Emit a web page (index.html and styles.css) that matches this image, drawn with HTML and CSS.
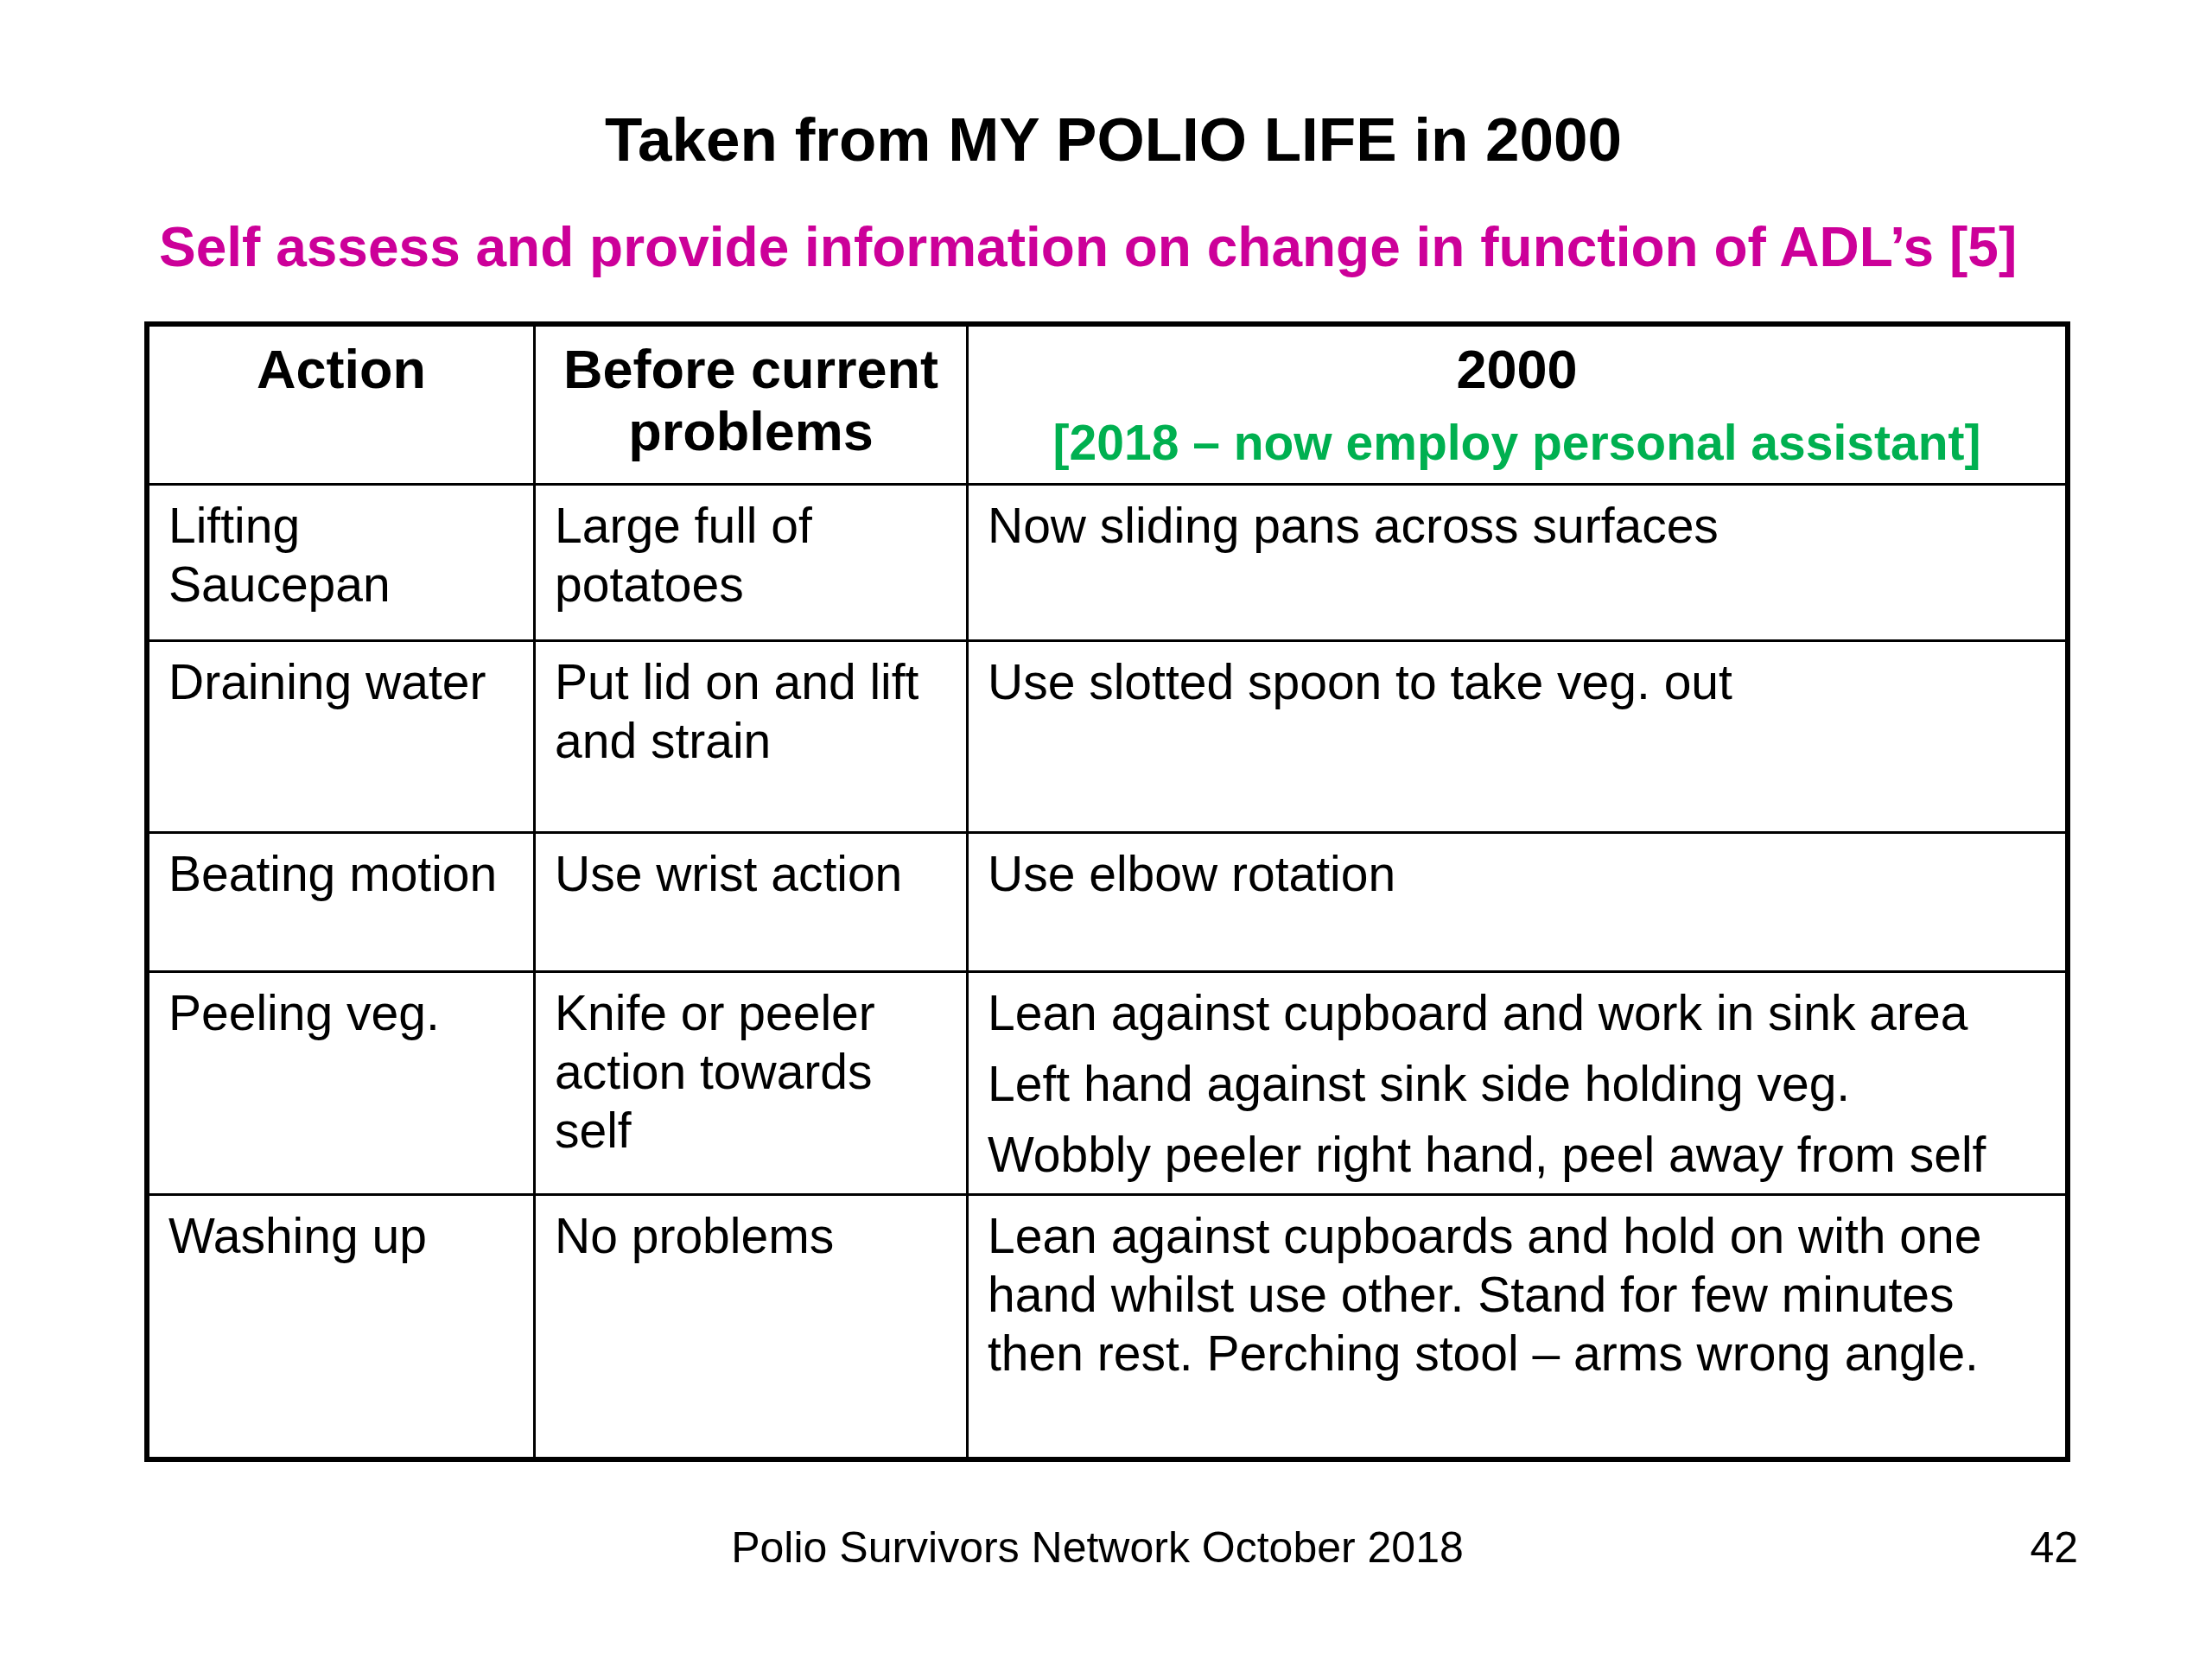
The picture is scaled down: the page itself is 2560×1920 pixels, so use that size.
FILE: index.html
```html
<!DOCTYPE html>
<html lang="en">
<head>
<meta charset="utf-8">
<title>Taken from MY POLIO LIFE in 2000</title>
<link rel="stylesheet" href="styles.css">
</head>
<body>
<div class="slide">
  <h1 class="title">Taken from MY POLIO LIFE in 2000</h1>
  <p class="subtitle">Self assess and provide information on change in function of ADL’s [5]</p>

  <div class="adl-table" role="table">
    <div class="cell head" role="columnheader">Action</div>
    <div class="cell head" role="columnheader">Before current problems</div>
    <div class="cell head" role="columnheader">
      <div>2000</div>
      <div class="note">[2018 – now employ personal assistant]</div>
    </div>

    <div class="cell" role="cell">Lifting Saucepan</div>
    <div class="cell" role="cell">Large full of potatoes</div>
    <div class="cell" role="cell">Now sliding pans across surfaces</div>

    <div class="cell" role="cell">Draining water</div>
    <div class="cell" role="cell">Put lid on and lift and strain</div>
    <div class="cell" role="cell">Use slotted spoon to take veg. out</div>

    <div class="cell" role="cell">Beating motion</div>
    <div class="cell" role="cell">Use wrist action</div>
    <div class="cell" role="cell">Use elbow rotation</div>

    <div class="cell" role="cell">Peeling veg.</div>
    <div class="cell" role="cell">Knife or peeler action towards self</div>
    <div class="cell" role="cell">
      <p class="para">Lean against cupboard and work in sink area</p>
      <p class="para">Left hand against sink side holding veg.</p>
      <p class="para">Wobbly peeler right hand, peel away from self</p>
    </div>

    <div class="cell last-row" role="cell">Washing up</div>
    <div class="cell last-row" role="cell">No problems</div>
    <div class="cell last-row" role="cell">Lean against cupboards and hold on with one hand whilst use other. Stand for few minutes then rest. Perching stool – arms wrong angle.</div>
  </div>

  <footer class="footer">
    <span></span>
    <span class="source">Polio Survivors Network October 2018</span>
    <span class="page-no">42</span>
  </footer>
</div>
</body>
</html>
```

FILE: styles.css
```css
html, body {
  margin: 0;
  padding: 0;
  background: #ffffff;
}

body {
  font-family: "Liberation Sans", Arial, Helvetica, sans-serif;
  color: #000000;
}

.slide {
  width: 2560px;
  height: 1920px;
  box-sizing: border-box;
  padding-top: 122px;
  display: flex;
  flex-direction: column;
}

.title {
  margin: 0;
  padding-left: 17px;
  font-size: 71px;
  line-height: 80px;
  font-weight: bold;
  text-align: center;
}

.subtitle {
  margin: 47px 0 0;
  padding-left: 184px;
  font-size: 64px;
  line-height: 74px;
  font-weight: bold;
  color: #cc0099;
}

.adl-table {
  margin: 49px 0 0 167px;
  width: 2229px;
  box-sizing: border-box;
  border: 6px solid #000000;
  display: grid;
  grid-template-columns: 447px 501px 1fr;
  grid-template-rows: 184px 181px 222px 161px 258px 302px;
}

.cell {
  box-sizing: border-box;
  border-right: 3px solid #000000;
  border-bottom: 3px solid #000000;
  padding: 12px 22px 0;
  font-size: 57px;
  line-height: 68px;
}

.cell:nth-child(3n) {
  border-right: 0;
  padding-right: 60px;
}

.cell.last-row {
  border-bottom: 0;
}

.cell.head {
  padding-top: 13px;
  padding-right: 22px;
  font-size: 63px;
  line-height: 72px;
  font-weight: bold;
  text-align: center;
}

.note {
  margin-top: 15px;
  font-size: 57px;
  line-height: 68px;
  color: #00b050;
}

.para {
  margin: 0;
}

.para + .para {
  margin-top: 14px;
}

.footer {
  margin-top: 70px;
  padding: 0 155px 0 135px;
  display: grid;
  grid-template-columns: 1fr auto 1fr;
  font-size: 50px;
  line-height: 58px;
}

.page-no {
  text-align: right;
}
```
